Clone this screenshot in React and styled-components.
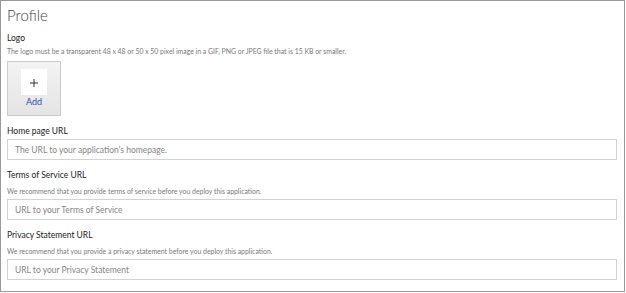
import React from "react";
import styled, { createGlobalStyle } from "styled-components";

const Global = createGlobalStyle`
  html, body { margin: 0; padding: 0; background: #fff; }
  * { box-sizing: border-box; }
`;

const Frame = styled.div`
  width: 625px;
  height: 292px;
  border: 1px solid #9a9a9a;
  padding: 0 7px 0 6px;
  font-family: Lato, "Noto Sans", sans-serif;
  color: #333;
  display: flex;
  flex-direction: column;
  overflow: hidden;
`;

const Title = styled.h1`
  margin: 2px 0 0 0;
  font-size: 15px;
  font-weight: 300;
  line-height: 24px;
  color: #444;
`;

const Label = styled.div`
  font-size: 8.5px;
  line-height: 12px;
  color: #222;
  margin-top: ${(p) => p.$mt || 0}px;
`;

const Hint = styled.div`
  font-size: 6.9px;
  line-height: 10px;
  color: #7a7a7a;
  margin-top: ${(p) => p.$mt || 0}px;
`;

const AddTile = styled.button`
  width: 54px;
  height: 55px;
  margin-top: 5px;
  padding: 7px 0 0 0;
  border: 1px solid #cbcbcb;
  background: linear-gradient(#f3f3f3, #e4e4e4);
  display: flex;
  flex-direction: column;
  align-items: center;
  font-family: inherit;
`;

const PlusBox = styled.span`
  width: 26px;
  height: 26px;
  background: #fff;
  display: flex;
  align-items: center;
  justify-content: center;
  padding-top: 1px;
  color: #333;
`;

const AddText = styled.span`
  font-size: 9px;
  line-height: 11px;
  margin-top: 1px;
  color: #2f4ea6;
`;

const Input = styled.input`
  display: block;
  flex: none;
  width: 100%;
  height: 21px;
  margin-top: ${(p) => p.$mt || 0}px;
  border: 1px solid #d3d3d3;
  padding: 0 7px;
  font-family: inherit;
  font-size: 8.5px;
  color: #333;
  outline: none;
  &::placeholder { color: #858585; }
`;

const PlusIcon = () => (
  <svg width="8" height="8" viewBox="0 0 8 8" aria-hidden="true">
    <path d="M4 0v8M0 4h8" stroke="#333" strokeWidth="1" fill="none" />
  </svg>
);

export default function App() {
  return (
    <>
      <Global />
      <Frame>
        <Title>Profile</Title>
        <Label $mt={5}>Logo</Label>
        <Hint $mt={2}>
          The logo must be a transparent 48 x 48 or 50 x 50 pixel image in a GIF, PNG or JPEG file that is 15 KB or smaller.
        </Hint>
        <AddTile type="button">
          <PlusBox><PlusIcon /></PlusBox>
          <AddText>Add</AddText>
        </AddTile>
        <Label $mt={9}>Home page URL</Label>
        <Input $mt={2} placeholder="The URL to your application's homepage." />
        <Label $mt={9}>Terms of Service URL</Label>
        <Hint $mt={5}>We recommend that you provide terms of service before you deploy this application.</Hint>
        <Input $mt={3} placeholder="URL to your Terms of Service" />
        <Label $mt={9}>Privacy Statement URL</Label>
        <Hint $mt={5}>We recommend that you provide a privacy statement before you deploy this application.</Hint>
        <Input $mt={3} placeholder="URL to your Privacy Statement" />
      </Frame>
    </>
  );
}
